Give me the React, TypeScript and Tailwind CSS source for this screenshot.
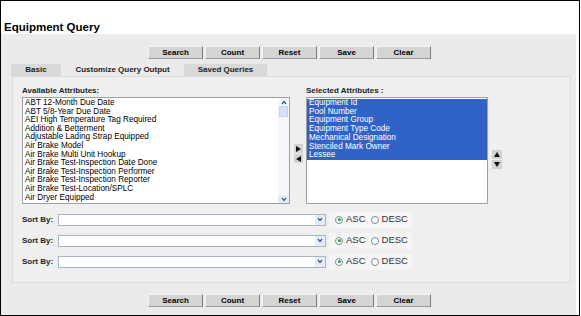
import React from 'react';

const available = [
  'ABT 12-Month Due Date',
  'ABT 5/8-Year Due Date',
  'AEI High Temperature Tag Required',
  'Addition & Betterment',
  'Adjustable Lading Strap Equipped',
  'Air Brake Model',
  'Air Brake Multi Unit Hookup',
  'Air Brake Test-Inspection Date Done',
  'Air Brake Test-Inspection Performer',
  'Air Brake Test-Inspection Reporter',
  'Air Brake Test-Location/SPLC',
  'Air Dryer Equipped',
];

const selected = [
  'Equipment Id',
  'Pool Number',
  'Equipment Group',
  'Equipment Type Code',
  'Mechanical Designation',
  'Stenciled Mark Owner',
  'Lessee',
];

const actions = ['Search', 'Count', 'Reset', 'Save', 'Clear'];

const ButtonRow: React.FC = () => (
  <div className="flex gap-[2px] pl-[147px]">
    {actions.map((a) => (
      <button
        key={a}
        className="w-[55px] h-[13px] bg-[#d4d4d4] border-t border-l border-t-[#f4f4f4] border-l-[#f4f4f4] border-r border-b border-r-[#7a7a7a] border-b-[#9a9a9a] text-[8px] leading-[11px] font-bold text-black">
        {a}
      </button>
    ))}
  </div>
);

const Tri: React.FC<{dir: 'up' | 'down' | 'left' | 'right'}> = ({dir}) => {
  const pts = {
    up: '1,6 4,1 7,6',
    down: '1,1 4,6 7,1',
    left: '6,1 1,4 6,7',
    right: '1,1 6,4 1,7',
  }[dir];
  return (
    <svg width="8" height="8" viewBox="0 0 8 8">
      <polygon points={pts} fill="#111" />
    </svg>
  );
};

const SortRow: React.FC = () => (
  <div className="flex items-center h-[21px]">
    <span className="w-[36px] text-[8px] font-bold text-[#222]">Sort By:</span>
    <div className="w-[268px] h-[12px] bg-white border border-[#a8b4c4] flex justify-end items-center">
      <div className="w-[10px] h-[10px] bg-[#e4ecf8] flex items-center justify-center">
        <svg width="6" height="5" viewBox="0 0 6 5">
          <polyline points="1,1 3,3.5 5,1" fill="none" stroke="#3c5a9a" strokeWidth="1.3" />
        </svg>
      </div>
    </div>
    <div className="ml-[3px] w-[83px] h-[16px] bg-[#f5f5f5] flex items-center pl-[6px] gap-[3px] text-[9.5px] text-[#333]">
      <span className="w-[8px] h-[8px] rounded-full border border-[#7a8a9a] bg-white flex items-center justify-center">
        <span className="w-[3px] h-[3px] rounded-full bg-[#2e9a3e]" />
      </span>
      <span className="mr-[2px]">ASC</span>
      <span className="w-[8px] h-[8px] rounded-full border border-[#7a8a9a] bg-white" />
      <span>DESC</span>
    </div>
  </div>
);

export default function App() {
  return (
    <div className="w-[581px] h-[316px] bg-white" style={{fontFamily: '"Liberation Sans", Arial, sans-serif'}}>
      <div className="w-[580px] h-[316px] border border-black flex flex-col">
        <div className="h-[33px] pt-[20px] pl-[3px] text-[11.5px] font-bold text-black leading-[13px]">
          Equipment Query
        </div>
        <div className="flex-1 mr-[3px] bg-[#ebebeb] flex flex-col pt-[12px]">
          <ButtonRow />
          <div className="flex mt-[5px] ml-[10px] h-[12px] text-[8px] font-bold text-[#222] leading-[12px]">
            <div className="w-[50px] bg-[#d9d9d9] text-center">Basic</div>
            <div className="w-[123px] text-center">Customize Query Output</div>
            <div className="w-[83px] bg-[#d9d9d9] text-center">Saved Queries</div>
          </div>
          <div className="ml-[11px] w-[559px] h-[207px] border border-[#dcdcdc] bg-[#efefef] pl-[9px] pt-[9px]">
            <div className="flex">
              <div className="flex flex-col">
                <div className="text-[8px] font-bold text-[#222] leading-[10px] mb-[1px]">Available Attributes:</div>
                <div className="w-[268px] h-[107px] bg-white border border-[#a0a0a0] flex">
                  <div className="flex-1 pl-[2px] pt-[1px] text-[8.2px] leading-[8.6px] text-black whitespace-nowrap overflow-hidden">
                    {available.map((a) => (
                      <div key={a}>{a}</div>
                    ))}
                  </div>
                  <div className="w-[11px] bg-[#f4f6fa] flex flex-col justify-between">
                    <div>
                      <div className="h-[8px] flex items-center justify-center">
                        <svg width="6" height="5" viewBox="0 0 6 5">
                          <polyline points="1,4 3,1.5 5,4" fill="none" stroke="#3c5a9a" strokeWidth="1.3" />
                        </svg>
                      </div>
                      <div className="h-[11px] mx-[1px] bg-[#d6e2f6] border border-[#c2d2ec]" />
                    </div>
                    <div className="h-[8px] flex items-center justify-center bg-[#e4ecf8]">
                      <svg width="6" height="5" viewBox="0 0 6 5">
                        <polyline points="1,1 3,3.5 5,1" fill="none" stroke="#3c5a9a" strokeWidth="1.3" />
                      </svg>
                    </div>
                  </div>
                </div>
              </div>
              <div className="flex flex-col gap-[1px] ml-[4px] mt-[58px]">
                <div className="w-[9px] h-[9px] bg-[#d2d2d2] flex items-center justify-center"><Tri dir="right" /></div>
                <div className="w-[9px] h-[9px] bg-[#d2d2d2] flex items-center justify-center"><Tri dir="left" /></div>
              </div>
              <div className="flex flex-col ml-[3px]">
                <div className="text-[8px] font-bold text-[#222] leading-[10px] mb-[1px]">Selected Attributes :</div>
                <div className="w-[182px] h-[107px] bg-white border border-[#a0a0a0] pt-[1px]">
                  <div className="bg-[#3163c6] text-white text-[8.2px] leading-[8.7px] pl-[2px] whitespace-nowrap">
                    {selected.map((s) => (
                      <div key={s}>{s}</div>
                    ))}
                  </div>
                </div>
              </div>
              <div className="flex flex-col gap-[1px] ml-[4px] mt-[64px]">
                <div className="w-[10px] h-[9px] bg-[#d2d2d2] flex items-center justify-center"><Tri dir="up" /></div>
                <div className="w-[10px] h-[9px] bg-[#d2d2d2] flex items-center justify-center"><Tri dir="down" /></div>
              </div>
            </div>
            <div className="flex flex-col mt-[5px]">
              <SortRow />
              <SortRow />
              <SortRow />
            </div>
          </div>
          <div className="mt-[11px]">
            <ButtonRow />
          </div>
        </div>
      </div>
    </div>
  );
}
